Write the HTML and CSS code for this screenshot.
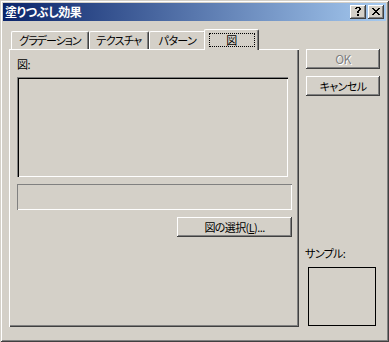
FILE: index.html
```html
<!DOCTYPE html>
<html lang="ja">
<head>
<meta charset="utf-8">
<title>塗りつぶし効果</title>
<link rel="stylesheet" href="styles.css">
</head>
<body>
<div class="window">
  <div class="titlebar">
    <span class="title">塗りつぶし効果</span>
    <div class="tbtns">
      <div class="tbtn">
        <svg width="6" height="9" viewBox="0 0 6 9" shape-rendering="crispEdges"><path fill="#000" d="M1 0h4v1H1zM0 1h2v1H0zM4 1h2v2H4zM3 3h2v1H3zM2 4h2v2H2zM2 7h2v2H2z"/></svg>
      </div>
      <div class="tbtn close">
        <svg width="8" height="7" viewBox="0 0 8 7" shape-rendering="crispEdges"><path fill="#000" d="M0 0h2v1H0zM6 0h2v1H6zM1 1h2v1H1zM5 1h2v1H5zM2 2h4v1H2zM3 3h2v1H3zM2 4h4v1H2zM1 5h2v1H1zM5 5h2v1H5zM0 6h2v1H0zM6 6h2v1H6z"/></svg>
      </div>
    </div>
  </div>
  <div class="body">
    <div class="tabctl">
      <div class="tabs">
        <div class="tab t1">グラデーション</div>
        <div class="tab t2">テクスチャ</div>
        <div class="tab t3">パターン</div>
        <div class="tab t4 selected"><span class="focus">図</span></div>
      </div>
      <div class="panel">
        <div class="lbl">図:</div>
        <div class="picbox"></div>
        <div class="field"></div>
        <div class="btnrow"><div class="btn pick">図の選択(<u>L</u>)...</div></div>
      </div>
    </div>
    <div class="side">
      <div class="btn ok disabled">OK</div>
      <div class="btn cancel">キャンセル</div>
      <div class="sample">
        <div class="slbl">サンプル:</div>
        <div class="sbox"></div>
      </div>
    </div>
  </div>
</div>
</body>
</html>
```

FILE: styles.css
```css
html, body {
  margin: 0;
  padding: 0;
  background: #d4d0c8;
}
body {
  font-family: "Noto Sans CJK JP", "Noto Sans", sans-serif;
  font-size: 11px;
  letter-spacing: -0.6px;
  font-feature-settings: "palt" 1;
  color: #000;
}
.window {
  width: 389px;
  height: 342px;
  box-sizing: border-box;
  padding: 3px;
  background: #d4d0c8;
  box-shadow: inset 1px 1px #d4d0c8, inset -1px -1px #404040, inset 2px 2px #fff, inset -2px -2px #808080;
  display: flex;
  flex-direction: column;
}
.titlebar {
  height: 18px;
  flex: none;
  background: linear-gradient(to right, #0a246a, #a6caf0);
  display: flex;
  align-items: center;
  justify-content: space-between;
  padding: 0 2px 0 2px;
}
.title {
  color: #fff;
  font-size: 12px;
  font-weight: 700;
  letter-spacing: -0.4px;
  line-height: 14px;
}
.tbtns {
  display: flex;
  gap: 2px;
}
.tbtn {
  width: 16px;
  height: 14px;
  box-sizing: border-box;
  background: #d4d0c8;
  box-shadow: inset -1px -1px #404040, inset 1px 1px #fff, inset -2px -2px #808080;
  display: flex;
  align-items: center;
  justify-content: center;
  padding: 0 1px 1px 0;
}
.tbtn svg { display: block; }
.body {
  flex: 1;
  display: flex;
  gap: 7px;
  padding: 8px 0 0 6px;
}
.tabctl {
  width: 290px;
  height: 298px;
  display: flex;
  flex-direction: column;
}
.tabs {
  height: 20px;
  flex: none;
  display: flex;
  align-items: flex-end;
  padding-left: 2px;
  position: relative;
  z-index: 1;
}
.tab {
  height: 18px;
  box-sizing: border-box;
  background: #d4d0c8;
  border-left: 1px solid #fff;
  border-top: 1px solid #fff;
  border-right: 1px solid #404040;
  border-radius: 2px 2px 0 0;
  box-shadow: inset -1px 0 #808080;
  display: flex;
  align-items: center;
  justify-content: center;
  line-height: 14px;
  padding-bottom: 1px;
  white-space: nowrap;
}
.t1 { width: 78px; letter-spacing: -1px; }
.t2 { width: 60px; }
.t3 { width: 57px; }
.t4 { width: 51px; }
.tab.selected {
  width: 55px;
  height: 21px;
  margin: 0 0 -1px -2px;
  position: relative;
  z-index: 2;
  align-items: flex-start;
  padding: 3px 0 0 0;
}
.focus {
  width: 46px;
  height: 14px;
  box-sizing: border-box;
  border: 1px dotted #000;
  display: flex;
  align-items: center;
  justify-content: center;
  line-height: 12px;
}
.panel {
  flex: 1;
  background: #d4d0c8;
  box-shadow: inset 1px 1px #fff, inset -1px -1px #404040, inset -2px -2px #808080;
  padding: 8px 7px 0 8px;
}
.lbl {
  line-height: 14px;
  height: 14px;
}
.picbox {
  margin-top: 6px;
  width: 271px;
  height: 100px;
  box-sizing: border-box;
  box-shadow: inset 1px 1px #808080, inset 2px 2px #000, inset -1px -1px #fff, inset -2px -2px #d4d0c8;
}
.field {
  margin-top: 7px;
  width: 275px;
  height: 26px;
  box-sizing: border-box;
  box-shadow: inset 1px 1px #808080, inset -1px -1px #fff;
}
.btnrow {
  margin-top: 7px;
  display: flex;
  justify-content: flex-end;
}
.btn {
  height: 20px;
  box-sizing: border-box;
  background: #d4d0c8;
  box-shadow: inset -1px -1px #404040, inset 1px 1px #fff, inset -2px -2px #808080;
  display: flex;
  align-items: center;
  justify-content: center;
  line-height: 14px;
  padding-bottom: 1px;
}
.btn u { text-underline-offset: 1px; }
.pick { width: 115px; }
.side {
  width: 74px;
  height: 298px;
  display: flex;
  flex-direction: column;
  padding-top: 20px;
  box-sizing: border-box;
}
.ok, .cancel { width: 74px; }
.cancel { margin-top: 7px; }
.disabled {
  color: #808080;
  text-shadow: 1px 1px #fff;
  font-size: 12px;
}
.sample {
  margin-top: auto;
  margin-bottom: 1px;
}
.slbl {
  line-height: 14px;
  margin: 0 0 7px -1px;
}
.sbox {
  margin-left: 2px;
  width: 68px;
  height: 59px;
  box-sizing: border-box;
  border: 1px solid #000;
}
```
